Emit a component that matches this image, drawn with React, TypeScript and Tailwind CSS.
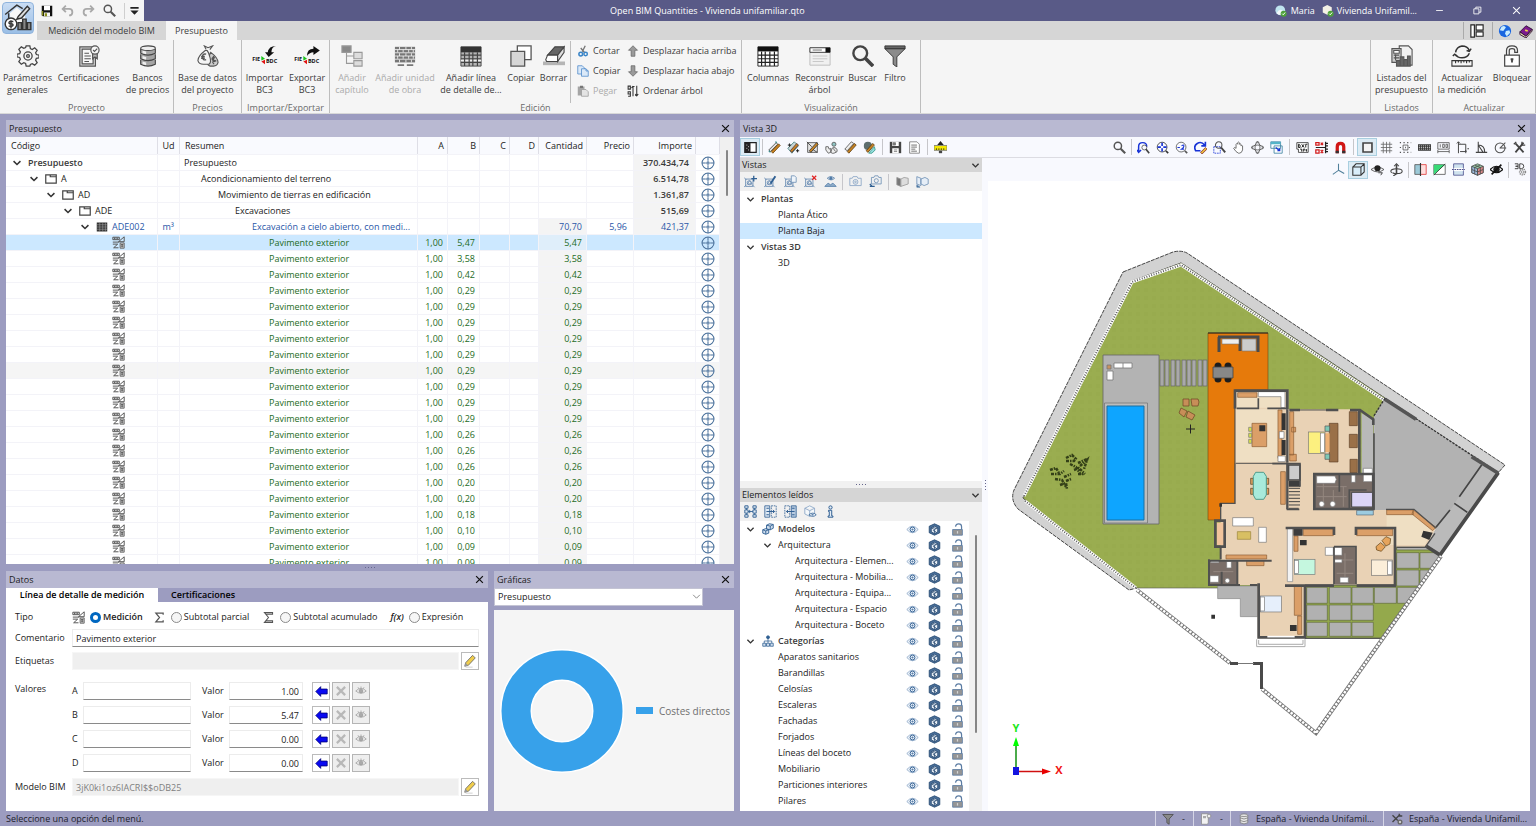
import { useState } from 'react';
import type { ReactNode } from 'react';
import clsx from 'clsx';

const NAVY = '#2f5f92';

/* Small icons, drawn on a 16x16 grid */
const glyphs: Record<string, ReactNode> = {
  chevron: <path d="M2.500 5l5.500 5.500L13.500 5" fill="none" stroke="#333" strokeWidth="2.400" />,
  close: <path d="M2 2l12 12M14 2L2 14" stroke="#111" strokeWidth="2.200" />,
  save: (
    <g>
      <path d="M1 1h14v14H2.500L1 13.500z" fill="#111" />
      <path d="M4 1h8v6H4z" fill="#fff" />
      <path d="M4 10h8v5H4z" fill="#f5f5f5" />
      <path d="M5 11h3v4H5zM1 8h2v6H1z" fill="#8a8f1c" />
    </g>
  ),
  saveGray: (
    <g>
      <path d="M1 1h14v14H1z" fill="#444" />
      <path d="M4 1h8v5H4zM4 9h8v6H4z" fill="#fff" />
      <path d="M5 2h3v3H5zM6 11h4M6 13h4" fill="#777" stroke="#777" />
    </g>
  ),
  undo: <path d="M6 2L2 6l4 4M2 6h8q4 0 4 4t-4 4" fill="none" stroke="#a9a9a9" strokeWidth="2.200" />,
  redo: <path d="M10 2l4 4-4 4M14 6H6q-4 0-4 4t4 4" fill="none" stroke="#a9a9a9" strokeWidth="2.200" />,
  search: (
    <g fill="none" stroke="#555">
      <circle cx="6" cy="6" r="4.500" strokeWidth="1.800" />
      <path d="M9.500 9.500L15 15" strokeWidth="2.600" />
    </g>
  ),
  customize: <path d="M2 3h12v2.500H2zM2 8h12L8 14z" fill="#222" />,
  scissors: (
    <g fill="none">
      <path d="M11 1L7 9M5 4l5 6" stroke="#777" strokeWidth="1.800" />
      <circle cx="5" cy="12" r="2.500" stroke="#3b86c8" strokeWidth="2" />
      <circle cx="11.500" cy="12" r="2.300" stroke="#3b86c8" strokeWidth="2" />
    </g>
  ),
  copyBlue: (
    <g stroke="#4a86c8" fill="#dbe9f8">
      <path d="M1 1h6l3 3v8H1z" />
      <path d="M6 5h6l3 3v7H6z" />
      <path d="M12 5v3h3" fill="none" />
    </g>
  ),
  paste: (
    <g>
      <path d="M1 2h9v12H1z" fill="#a5a5a5" />
      <path d="M4 1h4v3H4z" fill="#777" />
      <path d="M6 6h6l3 3v6H6z" fill="#e4e4e4" stroke="#999" />
    </g>
  ),
  arrowUp: <path d="M8 1l6 6h-3.500v8h-5V7H2z" fill="#9a9a9a" stroke="#666" />,
  arrowDown: <path d="M8 15l6-6h-3.500V1h-5v8H2z" fill="#9a9a9a" stroke="#666" />,
  sort: (
    <g fill="none" stroke="#333" strokeWidth="1.400">
      <path d="M1.500 1.500h3v4h-3zM1.500 9h3v3h-3zM4.500 9v6h-3" />
      <path d="M8 15V2M6 4l2-2.500M8 2h2M13 1v13M11 12l2 2.500 2-2.500M11 14h2" />
    </g>
  ),
  folder: <path d="M1 2.500h14v11H1zM7 2.500v2.500h8" fill="#fff" stroke="#444" strokeWidth="1.600" />,
  wall: (
    <g>
      <path d="M1 2h14v12H1z" fill="#333" />
      <path d="M1 5h14M1 8h14M1 11h14M5 2v12M9 2v12M12.500 2v12" stroke="#aaa" strokeWidth=".7" />
    </g>
  ),
  measure: (
    <g fill="none" stroke="#555">
      <path d="M1 1.500h8v3H1zM3 2v2M5 2v2M7 2v2M15 1v6H8zM1 7.500h8M1 10h6l-5 4.500h6" strokeWidth="1.200" />
      <path d="M10 8.500h5v6.500h-5z" fill="#d5d5d5" />
      <path d="M11 10.500h3M11 12.500h3M12.500 10v4" />
    </g>
  ),
  target: (
    <g fill="none" stroke="#4a719c" strokeWidth="1.200">
      <circle cx="8" cy="8" r="6.800" />
      <path d="M8 1v4.500M8 10.500V15M1 8h4.500M10.500 8H15" />
      <circle cx="8" cy="8" r="1.300" />
    </g>
  ),
  eye: (
    <g fill="none" stroke="#8aa6c6">
      <path d="M1 8q7-8 14 0-7 8-14 0z" fill="#f1f6fb" />
      <circle cx="8" cy="8" r="3" stroke={NAVY} strokeWidth="1.200" />
      <circle cx="8" cy="8" r="1" fill={NAVY} />
    </g>
  ),
  cube: (
    <g stroke="#23466e">
      <path d="M8 1l6.500 3v8L8 15l-6.500-3V4z" fill="#4a6f99" />
      <path d="M8 4l4 2v5l-4 2-4-2V6z" fill="#e8eef5" />
      <path d="M4 6l4 2 4-2M8 8v5M6 5l4 2M6 9l4 2" fill="none" strokeWidth=".9" />
    </g>
  ),
  lock: (
    <g>
      <path d="M5.500 4.500Q6 1 9.500 1T13 4.500V8" fill="none" stroke="#5b7ca3" strokeWidth="1.500" />
      <path d="M2 8h12v7H2z" fill="#959595" stroke="#5b7ca3" />
      <path d="M8 10v3" stroke="#d5d5d5" strokeWidth="1.500" />
    </g>
  ),
  modelos: (
    <g fill="#cfdded" stroke={NAVY} strokeWidth="1.200">
      <path d="M6 3l4-2 5 1v5l-4 2-5-1zM6 3l5 1 4-2M11 4v5" />
      <path d="M1 9l4-1.500 4 1.500v4.500L5 15l-4-1.500zM1 9l4 1.500L9 9M5 10.500V15" />
    </g>
  ),
  categorias: (
    <g fill="#cfdded" stroke={NAVY}>
      <path d="M8 4v4M3 11V8h10v3M8 8v3" fill="none" />
      <circle cx="8" cy="3" r="2" fill={NAVY} />
      <path d="M1 11h4v4H1zM6 11h4v4H6zM11 11h4v4h-4z" />
    </g>
  ),
  pencil: (
    <g>
      <path d="M2 14l1-4L11 1.500l3 3L6 13z" fill="#f0cd4c" stroke="#6b6b6b" />
      <path d="M2 14l1-4 3 3z" fill="#999" />
      <path d="M3 15h8" stroke="#ccc" />
    </g>
  ),
  arrowLeft: <path d="M1 8l6-6v3h8v6H7v3z" fill="#0909f2" stroke="#00007a" />,
  cross: <path d="M2.500 2.500l11 11M13.500 2.500l-11 11" stroke="#b8b8b8" strokeWidth="3" />,
  eyeGray: (
    <g fill="none" stroke="#999">
      <path d="M1 8q7-7 14 0-7 6-14 0z" />
      <circle cx="8" cy="8" r="2.500" fill="#aaa" />
      <path d="M4 3l1 2M8 2v2M12 3l-1 2" />
    </g>
  ),
  sidebar: (
    <g>
      <path d="M1 2h14v12H1z" fill="#fff" stroke="#222" strokeWidth="1.500" />
      <path d="M1 2h7v12H1z" fill="#222" />
      <path d="M3 5h1M5 7h1M3 9h1M5 11h1" stroke="#fff" />
    </g>
  ),
  ruler: (
    <g>
      <path d="M1 11L10 2l2 2-9 9z" fill="#e2e2e2" stroke="#444" />
      <path d="M4 13L13 3.500l2 2L6 15z" fill="#c98422" stroke="#6b4410" />
      <path d="M9 1l2 1M1 12l2 2" stroke="#3e8d8d" strokeWidth="1.500" />
    </g>
  ),
  rulerEdit: (
    <g>
      <path d="M1 9L9 1l5 5-8 9z" fill="#c9d6d6" stroke="#3e7d7d" />
      <path d="M4 12L12 3l2 2-8 9z" fill="#c98422" stroke="#533" />
      <path d="M1 5h4M11 12h4M3 3v4M13 10v4" stroke="#222" strokeWidth="1.200" />
    </g>
  ),
  rulerArea: (
    <g>
      <path d="M2 2v12h12V2z" fill="#e4e4e4" stroke="#666" strokeWidth="1.200" />
      <path d="M4 12L13 2l2 2L6 14z" fill="#c98422" stroke="#333" />
      <path d="M1 1l6 6M9 11l5 3" stroke="#333" />
    </g>
  ),
  hands: (
    <g stroke="#555" fill="#eee">
      <path d="M1 7h3l1 3 2-1v5l-3 1-3-4zM8 11q0-3 3-3t4 3-4 4-3-4z" />
      <circle cx="11" cy="4" r="2.500" fill="#8fc4c4" />
      <path d="M10 9l3 4" />
    </g>
  ),
  rulerCopy: (
    <g>
      <path d="M1 10L9 1l3 2-8 9z" fill="#eee" stroke="#555" />
      <path d="M4 13L13 3l2 2-9 10z" fill="#c98422" stroke="#5b3c12" />
    </g>
  ),
  rulerCyan: (
    <g>
      <circle cx="6" cy="6" r="5" fill="#5d6e6e" />
      <path d="M7 15l7-8 1 4-4 4z" fill="#92dcdc" stroke="#398" />
      <path d="M4 12L12 3l2 2-8 9z" fill="#c98422" stroke="#5b3c12" />
    </g>
  ),
  page: (
    <g>
      <path d="M2 1h9l3 3v11H2z" fill="#fff" stroke="#777" />
      <path d="M4 5h7M4 7.500h7M4 10h5M4 12.500h7" stroke="#555" />
    </g>
  ),
  rulerYellow: (
    <g>
      <path d="M8 0l4 5H4z" fill="#222" />
      <path d="M0 5.500h16v6H0z" fill="#f4e800" stroke="#777" />
      <path d="M3 9v2M6 9v2M9 9v2M12 9v2" stroke="#222" />
      <path d="M6 12h4v3H6z" fill="#444" />
    </g>
  ),
  zoomPrev: (
    <g fill="none">
      <path d="M2 14V7q0-5 5-5t5 5M0 11l2 3 3-3" stroke="#1733d6" strokeWidth="1.800" />
      <circle cx="9" cy="8" r="3" stroke="#555" />
      <path d="M11 10l4 5" stroke="#444" strokeWidth="2" />
    </g>
  ),
  zoomAll: (
    <g fill="none">
      <circle cx="7.500" cy="7.500" r="6" stroke="#333" />
      <path d="M7.500 2v4M7.500 9v4M2 7.500h4M9 7.500h4" stroke="#1733d6" strokeWidth="2" />
      <path d="M12 12l3 3" stroke="#333" strokeWidth="2" />
    </g>
  ),
  zoomTwo: (
    <g fill="none">
      <circle cx="7.500" cy="7.500" r="6" stroke="#555" />
      <path d="M3 8h3M8 6q3-2 3 0t-3 4h3" stroke="#1733d6" strokeWidth="1.300" />
      <path d="M12 12l3 3" stroke="#555" strokeWidth="2" />
    </g>
  ),
  redraw: (
    <g fill="none">
      <path d="M13 5Q9 0 4 3T2 12h6M14 1v5H9" stroke="#1733d6" strokeWidth="2" />
      <path d="M8 14l6-6 2 2-6 6z" fill="#e8b83a" stroke="#833" />
    </g>
  ),
  zoomWindow: (
    <g fill="none">
      <path d="M1 7h8v8H1z" stroke="#1733d6" strokeDasharray="2 1" />
      <circle cx="7" cy="5" r="4" stroke="#555" strokeWidth="1.300" />
      <path d="M10 8l5 6" stroke="#444" strokeWidth="2.400" />
    </g>
  ),
  hand: <path d="M5 9V4q1-2 2 0V2q1-1.500 2 0v2q1-1.500 2 0v2q1-1 2 0v5q-1 4-4 4H8Q5 14 2 9q1-2 3 0z" fill="#fff" stroke="#555" />,
  orbit: (
    <g fill="none" stroke="#555" strokeWidth="1.100">
      <ellipse cx="8" cy="8" rx="6" ry="3" />
      <ellipse cx="8" cy="8" rx="3" ry="6" />
      <path d="M6 2.500L8 0l2 2.500M6 13.500L8 16l2-2.500M2.500 6L0 8l2.500 2M13.500 6L16 8l-2.500 2" />
    </g>
  ),
  windows: (
    <g>
      <path d="M1 1h12v8H1zM5 6h10v9H5z" fill="#fff" stroke="#3a7f9f" />
      <path d="M1 1h12v3H1z" fill="#53b4c8" />
      <path d="M7 8l5 4m0-3v3H9" stroke="#1733d6" strokeWidth="1.500" fill="none" />
    </g>
  ),
  dxf: (
    <g>
      <path d="M1 2h14v12H3V10H1z" fill="#fff" stroke="#333" />
      <path d="M3 4v4h2V5zM7 4l3 4M10 4L7 8M12 8V4h2M5 10h2v3M9 13v-3h2v2M13 10v3" stroke="#222" fill="none" strokeWidth="1.200" />
    </g>
  ),
  dxfRed: (
    <g fill="none" strokeWidth="1.500">
      <path d="M1 2h4v3H1zM7 2l3 3M10 2L7 5M1 11h4v4H1zM7 11l3 4M10 11l-3 4" stroke="#d21b1b" />
      <path d="M1 8h12M13 1v14M13 3h3M13 6h3M13 10h3M13 13h3" stroke="#222" />
    </g>
  ),
  magnet: (
    <g fill="none" strokeWidth="4">
      <path d="M4 15V7q0-4 4-4t4 4v8" stroke="#d01616" />
      <path d="M4 15v-3M12 15v-3" stroke="#333" />
    </g>
  ),
  square: <path d="M2.500 2.500h11v11h-11z" fill="#f4f4f4" stroke="#444" strokeWidth="2" />,
  grid: <path d="M1 4h14M1 8h14M1 12h14M4 1v14M8 1v14M12 1v14" stroke="#666" strokeWidth="1" />,
  snap: (
    <g fill="none" stroke="#555">
      <path d="M5 5h6v6H5z" />
      <path d="M1 2h14M1 14h14M1 8h3M12 8h3" strokeDasharray="1.500 3" strokeWidth="1.500" />
      <path d="M7.500 8h1" strokeWidth="2" />
    </g>
  ),
  keyboard: (
    <g>
      <path d="M0 4h16v8H0z" fill="#333" />
      <path d="M1 6h14M1 8h14M1 10h14" stroke="#ddd" strokeDasharray="1.500 1" />
    </g>
  ),
  dims: (
    <g fill="none" stroke="#555">
      <path d="M1 2h14v8H1zM1 13h14M1 11v4M15 11v4" />
      <path d="M4 4v4M7 4h2v4H7zM11 4h2v4h-2z" />
    </g>
  ),
  extents: (
    <g fill="none" stroke="#444" strokeWidth="1.200">
      <path d="M3 15V1M1 3l2-2 2 2M3 4h9v9M5 13h8M12 15v-4" />
      <path d="M15 9v1" strokeWidth="2" />
    </g>
  ),
  angle: (
    <g fill="none" stroke="#444" strokeWidth="1.300">
      <path d="M4 1v13h11M4 5q8 0 8 9M4 5l6 9M1 14h3" />
    </g>
  ),
  gauge: (
    <g fill="none" stroke="#555" strokeWidth="1.300">
      <circle cx="7.500" cy="8.500" r="6" />
      <path d="M7 9l7-7M8 8.500h7" />
    </g>
  ),
  tools: (
    <g fill="none" stroke="#444" strokeWidth="2.200">
      <path d="M3 3l10 11M13 2L3 14" />
      <path d="M1 4l3-3M11 1v4h4" strokeWidth="1.500" />
    </g>
  ),
  toolsGear: (
    <g fill="none" stroke="#444" strokeWidth="1.800">
      <path d="M2 3l7 7M12 2L2 12M11 1v3h4" />
      <circle cx="12" cy="12" r="2.500" fill="#ccc" stroke="#666" />
    </g>
  ),
  axes: <path d="M8 1v8L1 14M8 9l7 4" fill="none" stroke="#51809a" strokeWidth="1.300" />,
  box: <path d="M1 5h10v10H1zM1 5l4-4h10v10l-4 4M11 5l4-4" fill="#d9eefa" stroke="#333" strokeWidth="1.300" />,
  orbitEye: (
    <g>
      <path d="M0 8q8-6 16 0-8 6-16 0z" fill="#f8f9fe" stroke="#444" />
      <circle cx="8" cy="6.500" r="3.800" fill="#222" />
      <path d="M9 12h5l-2 3" fill="none" stroke="#222" />
    </g>
  ),
  turntable: (
    <g fill="none" stroke="#444" strokeWidth="1.300">
      <ellipse cx="8" cy="10" rx="7" ry="3" />
      <path d="M8 2v12" strokeWidth="2" />
      <path d="M5 4l3-3 3 3M4 12l3 2-3 2" />
    </g>
  ),
  sectionRed: (
    <g>
      <path d="M1 2h7v12H1z" fill="#9cc9d8" stroke="#555" />
      <path d="M8 2h7v12H8z" fill="#ffdede" stroke="#e03a3a" />
      <path d="M8 0v16" stroke="#333" strokeWidth="1.400" />
    </g>
  ),
  sectionGreen: (
    <g>
      <path d="M1 2h14v12H1z" fill="#fff" stroke="#555" />
      <path d="M1 14V2h14z" fill="#38d977" />
      <path d="M1 15L15 1" stroke="#333" />
    </g>
  ),
  sectionBlue: (
    <g stroke="#4a4e8c">
      <path d="M2 1h12v14H2z" fill="#cfe2ee" />
      <path d="M2 6h12v4H2z" fill="#fff" stroke="none" />
      <path d="M0 8h16" strokeDasharray="2 1" strokeWidth="1.500" />
    </g>
  ),
  rubik: (
    <g stroke="#444" strokeWidth=".9">
      <path d="M8 1l7 3v8l-7 3-7-3V4z" fill="#9bcda9" />
      <path d="M8 7l7-3v8l-7 3z" fill="#d98a8a" />
      <path d="M1 4l7 3v8l-7-3z" fill="#9ab8d8" />
      <path d="M1 8l7 3 7-3M4.500 2.500l7 3v8M11.500 2.500l-7 3v8" fill="none" />
    </g>
  ),
  eyeOff: (
    <g fill="none" stroke="#111">
      <path d="M0 8q8-8 16 0-8 8-16 0z" strokeWidth="1.500" />
      <circle cx="8" cy="8" r="3.500" fill="#222" />
      <path d="M2 14L14 2" strokeWidth="2" />
    </g>
  ),
  gear3d: (
    <g fill="none" stroke="#444">
      <path d="M1 1h4v3H2h3v3H1M7 1h2q3 0 3 3T9 7H7z" strokeWidth="1.200" />
      <circle cx="10.500" cy="11" r="3.500" stroke="#888" strokeWidth="2" strokeDasharray="1.500 1" />
      <circle cx="10.500" cy="11" r="1.500" stroke="#888" />
    </g>
  ),
  viewBase: (
    <g fill="none" stroke="#6d8fb4" strokeWidth="1.100">
      <path d="M2 5h9v9H2zM0 3l3 3M0 15l3-3M13 15l-3-3M4 11l3-4 3 4z" />
      <circle cx="6.500" cy="9.500" r="2.500" />
    </g>
  ),
  viewEye: (
    <g fill="none" stroke="#4f7aa6">
      <path d="M4 4q4-4 9 0-4 4-9 0z" />
      <circle cx="8.500" cy="4" r="1.500" fill="#4f7aa6" />
      <path d="M1 14l4-4 3 2 3-2 4 4z" fill="#8fadc9" />
    </g>
  ),
  camera: (
    <g fill="none" stroke="#86a3c4">
      <path d="M1 4h3l1-2h5l1 2h4v9H1z" />
      <circle cx="8" cy="8.500" r="3" />
      <circle cx="8" cy="8.500" r="1" />
    </g>
  ),
  cameraSet: (
    <g fill="none" stroke="#6d8fb4">
      <path d="M3 3h3l1-2h4l1 2h3v8H3z" />
      <circle cx="9" cy="7" r="2.500" />
      <path d="M1 11l3 3M1 14h6" stroke={NAVY} strokeWidth="1.600" />
    </g>
  ),
  cubeGray: (
    <g stroke="#999">
      <path d="M1 3l5 2v9l-5-2z" fill="#777" />
      <path d="M6 5l4-2 5 1v7l-9 3z" fill="#ddd" />
    </g>
  ),
  cubeExport: (
    <g stroke="#6d8fb4" fill="#e6eef7">
      <path d="M1 2l5 2v9l-5-2zM6 5l5-2 4 2v6l-5 2-4-2z" />
      <path d="M1 12l4 3H1z" fill={NAVY} />
    </g>
  ),
  treeAll: (
    <g fill="#dfe9f3" stroke={NAVY} strokeWidth="1.100">
      <path d="M3 1v14M3 8h10M13 1v14M7 6v4" fill="none" />
      <path d="M1 1h4v3H1zM1 6h4v4H1zM1 12h4v3H1zM11 1h4v3h-4zM11 6h4v4h-4zM11 12h4v3h-4z" />
    </g>
  ),
  colLeft: (
    <g fill="none" stroke={NAVY}>
      <path d="M1 1h6v14H1z" fill="#dfe9f3" />
      <path d="M9 1h6v14H9z" strokeDasharray="2 1" />
      <path d="M3 4h3M3 8h10M3 12h3M11 6l2 2-2 2" strokeWidth="1.200" />
    </g>
  ),
  colRight: (
    <g fill="none" stroke={NAVY}>
      <path d="M1 1h6v14H1z" strokeDasharray="2 1" />
      <path d="M9 1h6v14H9z" fill="#b8cbe0" />
      <path d="M10 4h3M3 8h10M10 12h3M5 6L3 8l2 2" strokeWidth="1.200" />
    </g>
  ),
  cubeEye: (
    <g fill="#f4f8fb" stroke="#86a3c4">
      <path d="M7 1l6 3v7l-6 3-6-3V4zM1 4l6 3 6-3M7 7v7" />
      <path d="M6 12q5-4 9 0-4 4-9 0z" stroke={NAVY} />
      <circle cx="10.500" cy="12" r="1" fill={NAVY} />
    </g>
  ),
  info: (
    <g fill="#e3ecf5" stroke={NAVY} strokeWidth="1.200">
      <circle cx="8" cy="3" r="2" />
      <path d="M5.500 6.500h4v7H11V15H5v-1.500h1.500V8h-1z" />
    </g>
  ),
  funnel: <path d="M1 2h14L9.500 8v7l-3-2V8z" fill="#8a8a8a" stroke="#444" />,
  scroll: (
    <g>
      <path d="M2 1h9v12q0 2-2 2H2z" fill="#f2f2f2" stroke="#888" />
      <path d="M4 4h4v3H4z" fill="#aaa" />
      <circle cx="12" cy="4" r="2.500" fill="#eee" stroke="#888" />
    </g>
  ),
  database: (
    <g fill="#e6e6e6" stroke="#777">
      <path d="M3 3v10q5 3 10 0V3" />
      <ellipse cx="8" cy="3" rx="5" ry="1.800" />
      <path d="M3 6.500q5 3 10 0M3 10q5 3 10 0" fill="none" />
    </g>
  ),
  layout: (
    <g fill="#fff" stroke="#222" strokeWidth="1.300">
      <path d="M1 1h4v14H1zM7 1h8v6H7zM7 9h8v5H7z" />
    </g>
  ),
  globe: (
    <g>
      <circle cx="8" cy="8" r="7" fill="#1a66e0" />
      <path d="M4 3q4-2 5 1L6 8 2 7zM9 8l4-1 1 3-4 4-2-3z" fill="#c8ecff" />
    </g>
  ),
  book: (
    <g>
      <path d="M1 9l7-7 7 4-7 8z" fill="#7c1a8e" stroke="#2b0a33" />
      <path d="M1 9v3l7 4 7-8V6l-7 8z" fill="#e8d9b0" stroke="#2b0a33" />
      <path d="M7 7l3 1" stroke="#f3d34a" strokeWidth="2" />
    </g>
  ),
  user: (
    <g>
      <circle cx="7" cy="7" r="6.500" fill="#bfe4ef" />
      <path d="M2 11q5-8 9-2l-2 4H5z" fill="#f4f9fb" />
      <circle cx="11.500" cy="11.500" r="4" fill="#4ea13b" />
      <path d="M9.500 11.500l1.500 1.500 2.500-3" stroke="#fff" fill="none" strokeWidth="1.300" />
    </g>
  ),
  project: (
    <g>
      <path d="M7 0l6 3v7l-6 3-6-3V3z" fill="#f3f1e6" />
      <circle cx="11.500" cy="11.500" r="4" fill="#4ea13b" />
      <path d="M9.500 11.500l1.500 1.500 2.500-3" stroke="#fff" fill="none" strokeWidth="1.300" />
    </g>
  ),
  minimize: <path d="M2 8h12" stroke="#fff" strokeWidth="1.500" />,
  restore: <path d="M1.500 5h9v9h-9zM5 5V2h9v9h-3.500" fill="none" stroke="#fff" strokeWidth="1.500" />,
  closeWhite: <path d="M2 2l12 12M14 2L2 14" stroke="#fff" strokeWidth="1.800" />,
  sum: <path d="M12.500 4.500V2.500H3.500L8 8l-4.500 5.500h9v-2" fill="none" stroke="#555" strokeWidth="1.500" />,
  sumAll: <path d="M13 4.500V2H3l5 6-5 6h10v-2.500M4 4h9M4 12h9" fill="none" stroke="#555" strokeWidth="1.300" />,
};

/* Marks laid over the base view icon */
const viewMarks: Record<string, ReactNode> = {
  viewPlus: <path d="M12 1v7M9 4.500h7" stroke={NAVY} strokeWidth="1.600" />,
  viewPen: <path d="M7 10l6-9 2 1-6 9z" fill={NAVY} />,
  viewCopy: <path d="M9 1h4l2 2v6H9z" fill="#eef4fa" stroke="#6d8fb4" />,
  viewDel: <path d="M10 1l5 5M15 1l-5 5" stroke="#e02020" strokeWidth="1.600" />,
};

/* Ribbon icons, drawn on a 24x24 grid */
const bigGlyphs: Record<string, ReactNode> = {
  app: (
    <g stroke="#333" strokeWidth="1.200">
      <path d="M5 8l6-5 7 6v9H6z" fill="#f7f7f7" stroke="none" />
      <path d="M1 9l10-8 5 3M4 8v5" fill="none" />
      <path d="M12 11l8-9 2 2-7 8-4 1z" fill="#ddd" />
      <path d="M12 16h3v6h-3zM16 13h3v9h-3zM20 16h3v6h-3z" fill="#888" />
      <circle cx="6" cy="17" r="5" fill="#fff" />
      <path d="M8 15H5q-1.500 1 0 2h2q1.500 1 0 2H4M6 14v7" fill="none" />
    </g>
  ),
  gear: (
    <g fill="none" stroke="#444" strokeWidth="1.400">
      <path d="M10 1h4l.6 3 2 .9L19.300 3l2.700 2.700-1.700 2.700.9 2 2.800.6v3l-2.900.6-.8 2 1.700 2.700-2.700 2.700-2.700-1.700-2 .9L14 23h-4l-.6-2.800-2-.9L4.700 21 2 18.300l1.700-2.700-.9-2L0 13v-3l2.900-.6.8-2L2 4.700 4.700 2l2.700 1.700 2-.9z" />
      <circle cx="12" cy="12" r="4.500" />
      <circle cx="12" cy="12" r="1.500" />
    </g>
  ),
  certificate: (
    <g fill="#f7f7f7" stroke="#555" strokeWidth="1.300">
      <path d="M2 2h17v21H2z" fill="#ddd" />
      <path d="M4.500 4.500h12v16h-12z" />
      <path d="M7 9h5M7 12h7M7 15h7M7 18h5" />
      <path d="M16 8v7l2.500-2 2.500 2V8" fill="#bbb" />
      <circle cx="18.500" cy="5.500" r="4.500" />
      <path d="M16.500 5.500L18 7l3-3" fill="none" />
    </g>
  ),
  bank: (
    <g fill="#eee" stroke="#444" strokeWidth="1.200">
      <path d="M4 16v5q8 4 16 0v-5M4 10v5q8 4 16 0v-5M4 4v5q8 4 16 0V4" fill="#a5a5a5" />
      <path d="M6 6v3l4 1V7zM6 12v3l4 1v-3zM6 18v3l4 1v-3z" stroke="none" />
      <ellipse cx="12" cy="3.500" rx="8" ry="2.500" />
    </g>
  ),
  moneybag: (
    <g fill="#f4f4f4" stroke="#555" strokeWidth="1.200">
      <path d="M10 5L8 1l4 2 5-2-3 4" />
      <path d="M15 8q8 6 8 11-1 4-5 4h-4q-4-2-2-7 1-4 3-8z" fill="#ccc" />
      <path d="M9 6q-8 6-8 11 1 4 6 4h6q3-2 1-8-1-5-3-7z" />
      <path d="M10 10q-4-1-4 3t4 3M4.500 12.500h4M4.500 14.500h4M19.500 14q-3-1-3 1t3 2-3 2M18 12v9" fill="none" strokeWidth="1.500" />
    </g>
  ),
  columnsGrid: (
    <g>
      <path d="M1 2h22v21H1z" fill="#fff" stroke="#222" />
      <path d="M1 2h22v5H1z" fill="#111" />
      <path d="M1 11h22M1 15h22M1 19h22M5 7v16M9 7v16M14 7v16M19 7v16" stroke="#222" strokeWidth="1.300" />
    </g>
  ),
  detailLine: (
    <g>
      <path d="M1 2h22v21H1z" fill="#b5b5b5" stroke="#444" />
      <path d="M1 2h22v6H1z" fill="#333" />
      <path d="M1 16h22v2H1z" fill="#eee" />
      <path d="M1 11h22M1 15h22M1 19h22M5 8v15M10 8v15M14 8v15M19 8v15" stroke="#444" strokeWidth="1.300" />
    </g>
  ),
  chapter: (
    <g fill="#ddd" stroke="#999" strokeWidth="1.200">
      <path d="M6 8v12h8M6 12h8" fill="none" />
      <path d="M1 1h10v7H1z" fill="#888" />
      <path d="M14 8h9v7h-9zM14 17h9v6h-9z" />
    </g>
  ),
  bricks: (
    <g>
      <path d="M1 2h22v17H1z" fill="#777" />
      <path d="M1 5h22M1 8.500h22M1 12h22M1 15.500h22M6 2v3M13 2v3M19 2v3M4 5v3M10 5v3M16 5v3M21 5v3M6 9v3M13 9v3M19 9v3M4 12v3M10 12v3M16 12v3M21 12v3M6 16v3M13 16v3M19 16v3" stroke="#f5f5f5" strokeWidth=".9" />
      <path d="M4 22h7M14 22h7" stroke="#777" strokeWidth="2" />
    </g>
  ),
  copy: (
    <g fill="#fff" stroke="#555" strokeWidth="1.400">
      <path d="M8 1h15v15H8z" />
      <path d="M1 7h15v16H1z" fill="#d6d6d6" />
    </g>
  ),
  eraser: (
    <g stroke="#444" strokeWidth="1.200">
      <path d="M0 18h24v4H0z" fill="#b5b5b5" stroke="none" />
      <path d="M5 11L13 2h10l-7 9z" fill="#666" />
      <path d="M5 11h11v7H4l-1-2z" fill="#fff" />
      <path d="M16 11l7-9v6l-7 10z" fill="#ddd" />
    </g>
  ),
  rebuild: (
    <g>
      <path d="M1 3h22v19H1z" fill="#f0f0f0" stroke="#bbb" />
      <path d="M1 3h22v5H1z" fill="#fff" stroke="#333" />
      <path d="M18 3h5v5h-5z" fill="#111" />
      <path d="M4 5.500h10" stroke="#666" />
      <path d="M4 12h16M4 15h16M4 18h12" stroke="#c5c5c5" />
    </g>
  ),
  magnifier: (
    <g fill="none" stroke="#444">
      <circle cx="9" cy="9" r="7.500" strokeWidth="2.600" />
      <path d="M14.500 14.500L23 23" strokeWidth="4" />
    </g>
  ),
  filter: (
    <g stroke="#333">
      <path d="M1 4l9 9v8l4 3V13l9-9z" fill="#8b8b8b" />
      <path d="M1 1h22v3H1z" fill="#666" />
    </g>
  ),
  reports: (
    <g fill="#f1f1f1" stroke="#555" strokeWidth="1.200">
      <path d="M9 1h10l4 4v17H9z" />
      <path d="M1 4h10v15H1z" fill="#ccc" />
      <path d="M3 6h6v3H3zM3 11h6M3 14h6M5 10v7" fill="#fff" />
      <path d="M6 17h4v6H6zM10 13h4v10h-4zM14 16h4v7h-4zM18 12h3v11h-3z" fill="#666" />
    </g>
  ),
  update: (
    <g fill="none" stroke="#333" strokeWidth="1.600">
      <path d="M5 8q1-6 7-7 6 0 8 5M17 6l3 1 2-3M20 9q-2 5-8 5-5 0-8-4M2 12l2-2 3 2" />
      <path d="M1 17h22v6H1zM5 17v3M8 17v2M11 17v3M14 17v2M17 17v3M20 17v2" strokeWidth="1.200" />
    </g>
  ),
  padlock: (
    <g fill="none" stroke="#444" strokeWidth="1.300">
      <path d="M6 11V6q0-5 6-5t6 5v2h-3V6q0-2-3-2T9 6v5" />
      <path d="M4 11h16v12H4z" fill="#fff" />
      <path d="M12 15v4M10.500 15.500h3" strokeWidth="2" />
    </g>
  ),
};

function Icon({ name, className = 'size-3' }: { name: string; className?: string }) {
  return (
    <svg viewBox="0 0 16 16" className={clsx('shrink-0', className)} aria-hidden="true">
      {viewMarks[name] ? <>{glyphs.viewBase}{viewMarks[name]}</> : glyphs[name]}
    </svg>
  );
}

function Bc3Icon({ out = false }: { out?: boolean }) {
  return (
    <svg viewBox="0 0 28 24" className="h-[22px] w-[26px]" aria-hidden="true">
      {out ? (
        <path d="M14 12q0-8 7-8V1l7 5-7 5V8q-4 0-7 4z" fill="#111" />
      ) : (
        <path d="M26 1q-5 1-5 7h3l-6 5-4-5h3q1-7 9-7z" fill="#111" />
      )}
      <text x="0" y="17" fontSize="6" fontWeight="700" fill="#111">FIE</text>
      <text x="15" y="20" fontSize="6" fontWeight="700" fill="#111">BDC</text>
      <path d="M10 12l4 3-4 2z" fill="#19c319" />
      <path d="M14 16v5l-4-3z" fill="#e01212" />
    </svg>
  );
}

interface RibbonButtonProps {
  icon: string;
  lines: string[];
  width: string;
  disabled?: boolean;
}

function RibbonButton({ icon, lines, width, disabled }: RibbonButtonProps) {
  return (
    <button
      type="button"
      disabled={disabled}
      className={clsx('flex shrink-0 flex-col items-center pt-[5px] leading-3', width, disabled ? 'text-[#ababab]' : 'text-[#3c3c3c]')}
    >
      {icon === 'bc3in' || icon === 'bc3out' ? (
        <Bc3Icon out={icon === 'bc3out'} />
      ) : (
        <svg viewBox="0 0 24 24" className="size-[22px]" aria-hidden="true">{bigGlyphs[icon]}</svg>
      )}
      <span className="mt-[5px] flex flex-col whitespace-nowrap">
        {lines.map((line) => <span key={line}>{line}</span>)}
      </span>
    </button>
  );
}

function RibbonGroup({ label, children }: { label: string; children: ReactNode }) {
  return (
    <section className="flex shrink-0 flex-col border-r border-[#bdbdbd] px-px">
      <div className="flex h-[63px]">{children}</div>
      <div className="text-center leading-[10px] text-[#6a6a6a]">{label}</div>
    </section>
  );
}

function SmallAction({ icon, label, disabled }: { icon: string; label: string; disabled?: boolean }) {
  return (
    <button type="button" disabled={disabled} className={clsx('flex h-5 items-center gap-1 whitespace-nowrap', disabled ? 'text-[#ababab]' : 'text-[#3c3c3c]')}>
      <Icon name={icon} className="size-3" />
      {label}
    </button>
  );
}

function ToolButton({ icon, active, wide }: { icon: string; active?: boolean; wide?: boolean }) {
  return (
    <button
      type="button"
      aria-label={icon}
      className={clsx('flex h-[18px] shrink-0 items-center justify-center', wide ? 'w-5' : 'w-[19px]', active && 'border border-[#a9cfe0] bg-[#dcebf4]')}
    >
      <Icon name={icon} className="size-[13px]" />
    </button>
  );
}

function Divider({ tight }: { tight?: boolean }) {
  return <span className={clsx('h-4 w-px shrink-0 bg-[#c6c6ca]', tight ? 'mx-[2px]' : 'mx-[3px]')} />;
}

function PanelTitle({ children }: { children: ReactNode }) {
  return (
    <header className="flex h-[17px] shrink-0 items-center justify-between bg-[#b9b9d2] pr-1 pl-[3px] text-[#222]">
      <h2>{children}</h2>
      <button type="button" aria-label="Cerrar"><Icon name="close" className="size-[9px]" /></button>
    </header>
  );
}

function Grip({ vertical = false }: { vertical?: boolean }) {
  return (
    <span className={clsx('flex gap-[2px]', vertical && 'flex-col')}>
      {[0, 1, 2, 3].map((dot) => <i key={dot} className="size-px bg-[#66668c]" />)}
    </span>
  );
}

/* ---------- Title bar and ribbon ---------- */

function TitleBar() {
  return (
    <div className="flex h-[21px] items-center bg-[#595a87] text-white">
      <div className="flex h-full w-[107px] shrink-0 items-center gap-2 bg-[#f5f5f5] pl-1">
        <button type="button" aria-label="Guardar"><Icon name="save" className="size-3" /></button>
        <button type="button" aria-label="Deshacer"><Icon name="undo" className="size-[13px]" /></button>
        <button type="button" aria-label="Rehacer"><Icon name="redo" className="size-[13px]" /></button>
        <button type="button" aria-label="Buscar"><Icon name="search" className="size-[13px]" /></button>
        <span className="-mr-1 h-4 w-px bg-[#cfcfcf]" />
        <button type="button" aria-label="Personalizar"><Icon name="customize" className="size-[11px]" /></button>
      </div>
      <h1 className="min-w-0 flex-1 truncate pr-1 text-center">Open BIM Quantities - Vivienda unifamiliar.qto</h1>
      <div className="flex items-center">
        <Icon name="user" className="mr-1 size-3" />
        <span>Maria</span>
        <Icon name="project" className="mr-[3px] ml-[7px] size-3" />
        <span>Vivienda Unifamil...</span>
        <button type="button" aria-label="Minimizar" className="ml-[18px]"><Icon name="minimize" className="size-[9px]" /></button>
        <button type="button" aria-label="Restaurar" className="ml-[29px]"><Icon name="restore" className="size-[9px]" /></button>
        <button type="button" aria-label="Cerrar" className="mr-[15px] ml-[30px]"><Icon name="closeWhite" className="size-[9px]" /></button>
      </div>
    </div>
  );
}

function Ribbon() {
  return (
    <div className="shrink-0 bg-[#f5f5f5]">
      <div className="flex">
        <button type="button" aria-label="Open BIM Quantities" className="m-[2px] mr-[3px] flex size-8 items-center justify-center rounded-sm border border-[#8fb3dc] bg-linear-to-b from-[#c9dcf3] to-[#9bbfe6]">
          <svg viewBox="0 0 24 24" className="size-7" aria-hidden="true">{bigGlyphs.app}</svg>
        </button>
        <div className="min-w-0 flex-1">
          <TitleBar />
          <nav className="flex h-[19px] bg-[#d6d6d6] text-[#3c3c3c]">
            <button type="button" className="w-[129px]">Medición del modelo BIM</button>
            <button type="button" className="w-[71px] bg-[#f5f5f5]">Presupuesto</button>
            <div className="ml-auto flex items-center">
              <span className="mr-[6px] h-[17px] w-px bg-[#aaa]" />
              <button type="button" aria-label="Disposición"><Icon name="layout" className="size-[14px]" /></button>
              <span className="mr-[5px] ml-[8px] h-[17px] w-px bg-[#aaa]" />
              <button type="button" aria-label="Web"><Icon name="globe" className="size-[14px]" /></button>
              <button type="button" aria-label="Ayuda" className="mr-[3px] ml-[7px]"><Icon name="book" className="size-[14px]" /></button>
            </div>
          </nav>
        </div>
      </div>
      <div className="flex h-[74px] border-b border-[#d8d8d8]">
        <RibbonGroup label="Proyecto">
          <RibbonButton icon="gear" lines={['Parámetros', 'generales']} width="w-[53px]" />
          <RibbonButton icon="certificate" lines={['Certificaciones']} width="w-[69px]" />
          <RibbonButton icon="bank" lines={['Bancos', 'de precios']} width="w-[49px]" />
        </RibbonGroup>
        <RibbonGroup label="Precios">
          <RibbonButton icon="moneybag" lines={['Base de datos', 'del proyecto']} width="w-[65px]" />
        </RibbonGroup>
        <RibbonGroup label="Importar/Exportar">
          <RibbonButton icon="bc3in" lines={['Importar', 'BC3']} width="w-[43px]" />
          <RibbonButton icon="bc3out" lines={['Exportar', 'BC3']} width="w-[42px]" />
        </RibbonGroup>
        <RibbonGroup label="Edición">
          <RibbonButton icon="chapter" lines={['Añadir', 'capítulo']} width="w-[42px]" disabled />
          <RibbonButton icon="bricks" lines={['Añadir unidad', 'de obra']} width="w-[64px]" disabled />
          <RibbonButton icon="detailLine" lines={['Añadir línea', 'de detalle de...']} width="w-[68px]" />
          <RibbonButton icon="copy" lines={['Copiar']} width="w-8" />
          <RibbonButton icon="eraser" lines={['Borrar']} width="w-[33px]" />
          <div className="mt-px w-[51px] border-l border-[#bdbdbd] pl-[6px]">
            <SmallAction icon="scissors" label="Cortar" />
            <SmallAction icon="copyBlue" label="Copiar" />
            <SmallAction icon="paste" label="Pegar" disabled />
          </div>
          <div className="mt-px w-[119px] pl-[6px]">
            <SmallAction icon="arrowUp" label="Desplazar hacia arriba" />
            <SmallAction icon="arrowDown" label="Desplazar hacia abajo" />
            <SmallAction icon="sort" label="Ordenar árbol" />
          </div>
        </RibbonGroup>
        <RibbonGroup label="Visualización">
          <RibbonButton icon="columnsGrid" lines={['Columnas']} width="w-[50px]" />
          <RibbonButton icon="rebuild" lines={['Reconstruir', 'árbol']} width="w-[53px]" />
          <RibbonButton icon="magnifier" lines={['Buscar']} width="w-[33px]" />
          <RibbonButton icon="filter" lines={['Filtro']} width="mr-2 w-8" />
        </RibbonGroup>
        <div className="ml-auto flex border-l border-[#bdbdbd]">
          <RibbonGroup label="Listados">
            <RibbonButton icon="reports" lines={['Listados del', 'presupuesto']} width="w-[59px]" />
          </RibbonGroup>
          <RibbonGroup label="Actualizar">
            <RibbonButton icon="update" lines={['Actualizar', 'la medición']} width="w-[56px]" />
            <RibbonButton icon="padlock" lines={['Bloquear']} width="w-[44px]" />
          </RibbonGroup>
        </div>
      </div>
    </div>
  );
}

/* ---------- Budget table ---------- */

interface BudgetRow {
  level: number;
  icon?: string;
  code?: string;
  unit?: string;
  summary: string;
  a?: string;
  b?: string;
  amount?: string;
  price?: string;
  total?: string;
}

const quantities = [
  '5,47', '3,58', '0,42', '0,29', '0,29', '0,29', '0,29', '0,29', '0,29', '0,29', '0,29', '0,29',
  '0,26', '0,26', '0,26', '0,20', '0,20', '0,18', '0,10', '0,09', '0,09',
];

const rows: BudgetRow[] = [
  { level: 0, code: 'Presupuesto', summary: 'Presupuesto', total: '370.434,74' },
  { level: 1, icon: 'folder', code: 'A', summary: 'Acondicionamiento del terreno', total: '6.514,78' },
  { level: 2, icon: 'folder', code: 'AD', summary: 'Movimiento de tierras en edificación', total: '1.361,87' },
  { level: 3, icon: 'folder', code: 'ADE', summary: 'Excavaciones', total: '515,69' },
  { level: 4, icon: 'wall', code: 'ADE002', unit: 'm³', summary: 'Excavación a cielo abierto, con medi...', amount: '70,70', price: '5,96', total: '421,37' },
  ...quantities.map((q) => ({ level: 5, icon: 'measure', summary: 'Pavimento exterior', a: '1,00', b: q, amount: q })),
];

const SELECTED = 5;
const HOVERED = 13;

const headCell = 'border-r border-[#dedee6] p-0 font-normal';
const bodyCell = 'border-t border-r border-[#f3f3f8] py-0 pl-0 text-right';

function BudgetPanel() {
  return (
    <section className="flex min-h-0 flex-1 flex-col overflow-hidden bg-white">
      <PanelTitle>Presupuesto</PanelTitle>
      <div className="flex min-h-0 flex-1">
        <div className="min-w-0 flex-1 overflow-hidden">
          <table className="w-full table-fixed border-separate border-spacing-0 whitespace-nowrap">
            <colgroup>
              <col className="w-[152px]" />
              <col className="w-[22px]" />
              <col />
              <col className="w-[30px]" />
              <col className="w-8" />
              <col className="w-[30px]" />
              <col className="w-[29px]" />
              <col className="w-12" />
              <col className="w-[47px]" />
              <col className="w-[62px]" />
              <col className="w-6" />
            </colgroup>
            <thead>
              <tr className="h-[17px] bg-[#f9fafe] text-[#222]">
                <th className={clsx(headCell, 'pl-[5px] text-left')}>Código</th>
                <th className={clsx(headCell, 'text-center')}>Ud</th>
                <th className={clsx(headCell, 'pl-[5px] text-left')}>Resumen</th>
                {['A', 'B', 'C', 'D', 'Cantidad', 'Precio', 'Importe'].map((title) => (
                  <th key={title} className={clsx(headCell, 'pr-[3px] text-right')}>{title}</th>
                ))}
                <th className={headCell} aria-label="Localizar" />
              </tr>
            </thead>
            <tbody>
              {rows.map((row, i) => {
                const detail = row.level === 5;
                const selected = i === SELECTED;
                return (
                  <tr
                    key={i}
                    className={clsx('h-4 leading-[15px]', selected && 'bg-[#cce8ff]', i === HOVERED && 'bg-[#f5f5f5]', detail ? 'text-[#1d6b1d]' : row.level === 4 ? 'text-[#2a57a8]' : 'text-[#222]')}
                  >
                    <td className={clsx(bodyCell, 'pr-0', row.level === 0 && 'font-semibold text-[#3a3a3a]')}>
                      <span className="flex h-[15px] items-center" style={{ paddingLeft: 6 + row.level * 17 }}>
                        {!detail && <Icon name="chevron" className="mr-[6px] size-[10px]" />}
                        {row.icon && <Icon name={row.icon} className={clsx(detail ? 'ml-[15px] size-[13px]' : 'mr-1 size-3')} />}
                        {row.code}
                      </span>
                    </td>
                    <td className={clsx(bodyCell, 'pr-[5px]')}>{row.unit}</td>
                    <td className={clsx(bodyCell, 'overflow-hidden pr-1')}>
                      <span className="block truncate text-left" style={{ paddingLeft: 4 + row.level * 17 }}>{row.summary}</span>
                    </td>
                    <td className={clsx(bodyCell, 'pr-1')}>{row.a}</td>
                    <td className={clsx(bodyCell, 'pr-1')}>{row.b}</td>
                    <td className={bodyCell} />
                    <td className={bodyCell} />
                    <td className={clsx(bodyCell, 'pr-1', row.amount && (selected ? 'bg-[#dfeefa]' : 'bg-[#f4f4f4]'))}>{row.amount}</td>
                    <td className={clsx(bodyCell, 'pr-[6px]')}>{row.price}</td>
                    <td className={clsx(bodyCell, 'pr-[6px]', !detail && 'bg-[#f4f4f4]', row.level < 4 && 'font-semibold text-[#3a3a3a]')}>{row.total}</td>
                    <td className={clsx(bodyCell, 'pr-0')}>
                      <button type="button" aria-label="Localizar" className="flex h-[15px] w-full items-center justify-center">
                        <Icon name="target" className="size-[14px]" />
                      </button>
                    </td>
                  </tr>
                );
              })}
            </tbody>
          </table>
        </div>
        <div className="flex w-[14px] justify-center bg-[#f0f0f0] pt-[13px]">
          <span className="h-[46px] w-[2px] rounded-full bg-[#868686]" />
        </div>
      </div>
    </section>
  );
}

/* ---------- Detail form ---------- */

const kinds = [
  { id: 'medicion', label: 'Medición', icon: 'measure', gap: '' },
  { id: 'parcial', label: 'Subtotal parcial', icon: 'sum', gap: 'ml-[10px]' },
  { id: 'acumulado', label: 'Subtotal acumulado', icon: 'sumAll', gap: 'ml-[13px]' },
  { id: 'expresion', label: 'Expresión', icon: '', gap: 'ml-[13px]' },
];

const dimensions = [
  { id: 'A', value: '1.00' },
  { id: 'B', value: '5.47' },
  { id: 'C', value: '0.00' },
  { id: 'D', value: '0.00' },
];

const field = 'h-[18px] min-w-0 border border-[#ececec] border-b-[#8a8a8a] bg-white px-[3px] text-[#222]';
const readOnlyField = 'h-[18px] min-w-0 flex-1 border border-[#f6f6f6] bg-[#efefef] px-[3px] text-[#808080]';
const squareButton = 'flex size-[18px] shrink-0 items-center justify-center border';

function DetailPanel() {
  const [kind, setKind] = useState('medicion');

  return (
    <section className="flex min-w-0 flex-col">
      <PanelTitle>Datos</PanelTitle>
      <div className="flex h-[14px] shrink-0 font-semibold text-black">
        <button type="button" className="w-[152px] bg-white">Línea de detalle de medición</button>
        <button type="button" className="ml-[13px]">Certificaciones</button>
      </div>
      <div className="flex-1 bg-white px-[9px] pt-[6px] text-[#222]">
        <div className="flex h-[18px] items-center whitespace-nowrap">
          <span className="w-[57px]">Tipo</span>
          {kinds.map(({ id, label, icon, gap }) => (
            <label key={id} className={clsx('flex items-center', gap, id === kind && 'font-semibold')}>
              {icon ? <Icon name={icon} className="mr-[5px] size-[13px]" /> : <i className="mr-[5px] font-semibold">f(x)</i>}
              <input
                type="radio"
                name="kind"
                checked={id === kind}
                onChange={() => setKind(id)}
                className="mr-[2px] size-[11px] appearance-none rounded-full border border-[#8a8a8a] bg-[#f6f6f6] checked:border-[3px] checked:border-[#0067c0] checked:bg-white"
              />
              {label}
            </label>
          ))}
        </div>
        <div className="mt-[3px] flex items-center">
          <label htmlFor="comment" className="w-[57px]">Comentario</label>
          <input id="comment" defaultValue="Pavimento exterior" className={clsx(field, 'flex-1')} />
        </div>
        <div className="mt-[5px] flex items-center">
          <label htmlFor="tags" className="w-[57px]">Etiquetas</label>
          <input id="tags" readOnly className={readOnlyField} />
          <button type="button" aria-label="Editar etiquetas" className={clsx(squareButton, 'ml-[2px] border-[#bbb] bg-white')}><Icon name="pencil" className="size-[14px]" /></button>
        </div>
        <div className="mt-3 flex">
          <span className="w-[57px] pt-px">Valores</span>
          <div className="flex flex-col gap-[6px]">
            {dimensions.map(({ id, value }) => (
              <div key={id} className="flex items-center">
                <label htmlFor={`name-${id}`} className="w-[11px]">{id}</label>
                <input id={`name-${id}`} className={clsx(field, 'w-[108px]')} />
                <label htmlFor={`value-${id}`} className="ml-[11px] w-[27px]">Valor</label>
                <input id={`value-${id}`} defaultValue={value} className={clsx(field, 'w-[74px] text-right')} />
                <button type="button" aria-label="Asignar" className={clsx(squareButton, 'ml-[9px] border-[#bbb] bg-white')}><Icon name="arrowLeft" className="size-[13px]" /></button>
                <button type="button" aria-label="Borrar" disabled className={clsx(squareButton, 'ml-[2px] border-[#b5b5b5] bg-[#eee]')}><Icon name="cross" /></button>
                <button type="button" aria-label="Ver" disabled className={clsx(squareButton, 'ml-[2px] border-[#b5b5b5] bg-[#eee]')}><Icon name="eyeGray" /></button>
              </div>
            ))}
          </div>
        </div>
        <div className="mt-[6px] flex items-center">
          <label htmlFor="model" className="w-[57px] whitespace-nowrap">Modelo BIM</label>
          <input id="model" readOnly value="3jK0ki1oz6IACRI$$oDB25" className={readOnlyField} />
          <button type="button" aria-label="Editar modelo" className={clsx(squareButton, 'ml-[2px] border-[#bbb] bg-white')}><Icon name="pencil" className="size-[14px]" /></button>
        </div>
      </div>
    </section>
  );
}

function ChartPanel() {
  return (
    <section className="flex min-w-0 flex-col">
      <PanelTitle>Gráficas</PanelTitle>
      <div className="relative w-[209px]">
        <select aria-label="Gráfica" className="h-[18px] w-full appearance-none border border-[#c4c4d4] bg-white px-[3px] text-[#222]">
          <option>Presupuesto</option>
        </select>
        <svg viewBox="0 0 16 16" className="pointer-events-none absolute top-1 right-[2px] size-[9px]" aria-hidden="true">
          <path d="M2 5l6 6 6-6" fill="none" stroke="#777" strokeWidth="1.500" />
        </svg>
      </div>
      <div className="mt-1 flex flex-1 items-center bg-[#f5f5f5] pl-[6px]">
        <svg viewBox="0 0 124 124" className="size-[124px] shrink-0" aria-label="Costes directos">
          <circle cx="62" cy="62" r="46" fill="none" stroke="#fff" strokeWidth="32" />
          <circle cx="62" cy="62" r="46" fill="none" stroke="#37a1ea" strokeWidth="29" />
        </svg>
        <span className="mr-[6px] ml-3 h-[7px] w-[17px] shrink-0 bg-[#37a1ea]" />
        <span className="text-[10px] whitespace-nowrap text-[#6f6f6f]">Costes directos</span>
      </div>
    </section>
  );
}

/* ---------- View trees ---------- */

function SideHeader({ children }: { children: ReactNode }) {
  return (
    <header className="flex h-[14px] shrink-0 items-center justify-between bg-[#d5d5d5] px-[2px] text-[#222]">
      <h3>{children}</h3>
      <Icon name="chevron" className="size-[9px]" />
    </header>
  );
}

function SideTool({ icon }: { icon: string }) {
  return (
    <button type="button" aria-label={icon} className="flex h-[18px] w-5 shrink-0 items-center justify-center">
      <Icon name={icon} className="size-[13px]" />
    </button>
  );
}

const views = [
  { label: 'Plantas', group: true },
  { label: 'Planta Ático' },
  { label: 'Planta Baja', selected: true },
  { label: 'Vistas 3D', group: true },
  { label: '3D' },
];

interface ElementRow {
  label: string;
  kind?: 'root' | 'branch' | 'leaf';
  icon?: string;
}

const elements: ElementRow[] = [
  { label: 'Modelos', kind: 'root', icon: 'modelos' },
  { label: 'Arquitectura', kind: 'branch' },
  { label: 'Arquitectura - Elemen...', kind: 'leaf' },
  { label: 'Arquitectura - Mobilia...', kind: 'leaf' },
  { label: 'Arquitectura - Equipa...', kind: 'leaf' },
  { label: 'Arquitectura - Espacio', kind: 'leaf' },
  { label: 'Arquitectura - Boceto', kind: 'leaf' },
  { label: 'Categorías', kind: 'root', icon: 'categorias' },
  { label: 'Aparatos sanitarios' },
  { label: 'Barandillas' },
  { label: 'Celosías' },
  { label: 'Escaleras' },
  { label: 'Fachadas' },
  { label: 'Forjados' },
  { label: 'Líneas del boceto' },
  { label: 'Mobiliario' },
  { label: 'Particiones interiores' },
  { label: 'Pilares' },
];

function ViewsSidebar() {
  return (
    <aside className="flex w-[242px] shrink-0 flex-col text-[#222]">
      <SideHeader>Vistas</SideHeader>
      <div className="flex h-[19px] shrink-0 items-center bg-[#f1f1f1]">
        {['viewPlus', 'viewPen', 'viewCopy', 'viewDel', 'viewEye'].map((icon) => <SideTool key={icon} icon={icon} />)}
        <Divider tight />
        <SideTool icon="camera" />
        <SideTool icon="cameraSet" />
        <Divider />
        <SideTool icon="cubeGray" />
        <SideTool icon="cubeExport" />
      </div>
      <ul className="min-h-0 flex-1 overflow-hidden bg-white">
        {views.map(({ label, group, selected }) => (
          <li key={label} className={clsx('flex h-4 items-center', group ? 'pl-[6px] font-semibold text-[#3a3a3a]' : 'pl-[38px]', selected && 'bg-[#cce8ff]')}>
            {group && <Icon name="chevron" className="mr-[6px] size-[9px]" />}
            {label}
          </li>
        ))}
      </ul>
      <div className="flex h-[7px] shrink-0 items-center justify-center bg-[#f1f1f1]"><Grip /></div>
      <SideHeader>Elementos leídos</SideHeader>
      <div className="flex h-[19px] shrink-0 items-center bg-[#f1f1f1]">
        {['treeAll', 'colLeft', 'colRight', 'cubeEye', 'info'].map((icon) => <SideTool key={icon} icon={icon} />)}
      </div>
      <div className="flex h-[290px] shrink-0 bg-white">
        <ul className="min-w-0 flex-1 overflow-hidden whitespace-nowrap">
          {elements.map(({ label, kind, icon }) => (
            <li
              key={label}
              className={clsx('flex h-4 items-center', kind === 'root' ? 'pl-[6px] font-semibold text-[#3a3a3a]' : kind === 'branch' ? 'pl-[23px]' : kind === 'leaf' ? 'pl-[55px]' : 'pl-[38px]')}
            >
              {(kind === 'root' || kind === 'branch') && <Icon name="chevron" className="mr-[6px] size-[9px]" />}
              {icon && <Icon name={icon} className="mr-1 ml-px size-3" />}
              <span className="min-w-0 flex-1 truncate">{label}</span>
              <button type="button" aria-label="Visible"><Icon name="eye" className="size-[13px]" /></button>
              <button type="button" aria-label="Representación" className="ml-[9px]"><Icon name="cube" className="size-[13px]" /></button>
              <button type="button" aria-label="Bloqueo" className="mr-[5px] ml-[10px]"><Icon name="lock" className="size-[13px]" /></button>
            </li>
          ))}
        </ul>
        <div className="flex w-[13px] justify-center bg-[#f1f1f1] pt-[14px]">
          <span className="h-[198px] w-[2px] rounded-full bg-[#868686]" />
        </div>
      </div>
    </aside>
  );
}

/* ---------- Floor plan ---------- */

function Bed({ x, y, w, h, fill, flip }: { x: number; y: number; w: number; h: number; fill: string; flip?: boolean }) {
  return (
    <g stroke="#777" strokeWidth="2">
      <rect x={x} y={y} width={w} height={h} fill={fill} />
      <rect x={flip ? x + w - 14 : x} y={y + 3} width="13" height={h - 6} fill="#fff" />
    </g>
  );
}

function House() {
  return (
    <g transform="translate(1190 320) scale(0.3333)">
      {/* paved garden */}
      <path d="M345 680H760L750 705 573 955H345z" fill="#94a94c" stroke="#555" strokeWidth="3" />
      <clipPath id="garden"><path d="M345 680H768L573 955H345z" /></clipPath>
      <g fill="#b1b1b1" stroke="#5f6b3a" strokeWidth="2" clipPath="url(#garden)">
        <path d="M620 680h130v10H620zM620 698h67v47h-67zM690 698h67v47h-67zM620 750h67v48h-67zM690 750h67v48h-67z" />
        <path d="M350 802h62v48h-62zM418 802h65v48h-65zM486 802h64v48h-64zM553 802h66v48h-66zM622 802h66v48h-66z" />
        <path d="M350 855h62v46h-62zM418 855h65v46h-65zM486 855h64v46h-64zM350 907h62v42h-62zM418 907h65v42h-65zM486 907h64v42h-64z" />
      </g>
      <path d="M83 798h120v92h-52v-54H83z" fill="#b4b4b4" stroke="#888" strokeWidth="2" />

      {/* driveway */}
      <path d="M585 235L925 458 750 705 705 680 738 625 670 570H553V290z" fill="#b2b2b2" />
      <path d="M585 235L550 290M585 235L925 458" fill="none" stroke="#333" strokeWidth="4" strokeDasharray="7 4" />
      <path d="M875 435L925 458 750 705 712 680 742 622 780 572 808 528z" fill="#bababa" />
      <path d="M925 458L750 705 708 678" fill="none" stroke="#4a4a4a" strokeWidth="11" />
      <path d="M585 238L678 298M845 410L925 460" stroke="#555" strokeWidth="11" />
      <path d="M875 435L808 530M793 550L832 577M780 570L738 622" stroke="#444" strokeWidth="5" />

      {/* floor */}
      <path d="M135 210H295V268H510V460H552V570H670L738 625 708 680H617V795H345V955H203V795H55V720H92V550H135z" fill="#e9d2b5" />
      <path d="M140 218h145v45H140zM138 268h125v158H138zM590 585h80l55 48-20 42H590z" fill="#efdfc3" />
      <path d="M515 280l35 20v160h-35z" fill="#b9b9b9" />
      <path d="M373 462h178v105H373zM432 682h65v110h-65zM58 722h85v70H58z" fill="#7a6e68" />
      <path d="M380 500h90M380 530h90M400 480v80M430 510v50M460 500v60M440 720h50M440 760h50M465 700v90M70 755h60" stroke="#94877f" strokeWidth="3" />

      {/* furniture */}
      <g fill="#db9f68" stroke="#8a5c33" strokeWidth="2">
        <path d="M186 310h44v70h-44zM143 218h58v14h-58zM264 270h12v145h-12zM299 275h12v130h-12zM272 455h14v98h-14zM299 403h20v20h-20zM305 322h12v14h-12z" />
        <path d="M340 627h90v20h-90zM500 627h108v20H500zM590 570h80v14h-80zM670 570l68 52-10 10-62-50zM312 648h12v46h-12zM108 705h122v12H108zM170 722h52v15h-52zM313 798h22v88h-22zM323 888h12v55h-12z" />
        <path d="M558 680l14-12 14 12-12 14-14-4zM576 662l12-12 14 6-2 16-12 6z" fill="#e6a45c" stroke="#5b3c12" />
      </g>
      <g fill="#9a7048" stroke="#5f4328" strokeWidth="2">
        <path d="M418 310h26v116h-26zM478 275h24v42h-24zM478 343h24v40h-24zM480 418h22v40h-22z" />
      </g>
      <path d="M405 340h14v56h-14z" fill="#efb276" />
      <path d="M405 318h14v16h-14zM405 402h14v16h-14z" fill="#7fc8b5" stroke="#555" strokeWidth="2" />
      <Bed x={355} y={336} w={50} h={64} fill="#fcf07f" flip />
      <Bed x={313} y={718} w={62} h={46} fill="#c5f7df" />
      <Bed x={545} y={720} w={62} h={46} fill="#fbeed9" flip />
      <Bed x={211} y={828} w={63} h={48} fill="#e6effb" />
      <path d="M205 215h80v48h-12v-33h-68z" fill="#fff" stroke="#777" strokeWidth="2" />
      <path d="M208 316h18v18h-18zM275 280h12v50h-12zM275 360h12v45h-12zM330 660h20v16h-20zM300 915h20v18h-20zM700 632l28 6-10 22-24-10z" fill="#333" />
      <g fill="#d7e04a" stroke="#777" strokeWidth="2">
        <path d="M176 322h9v12h-9zM176 340h9v12h-9zM176 358h9v12h-9z" />
      </g>
      <g fill="#dba05e" stroke="#553a1c" strokeWidth="2">
        <path d="M182 475h8v18h-8zM182 505h8v18h-8zM228 475h8v18h-8zM228 505h8v18h-8z" />
      </g>
      <path d="M197 457h24l8 12v56l-8 13h-24l-7-13v-56z" fill="#a8eadb" stroke="#4f9b8b" strokeWidth="3" />
      <g fill="#fff" stroke="#777" strokeWidth="2">
        <path d="M128 593h62v25h-62zM206 622h23v45h-23zM268 335h14v20h-14zM264 408h22v17h-22zM520 445h27v40h-27zM484 465h12v22h-12zM432 682h24v24h-24zM406 682h24v24h-24zM450 772h25v16h-25zM434 718h22v10h-22zM60 767h26v20H60zM62 722h25v6H62zM110 724h14v20h-14z" />
        <path d="M380 468h55l4 10-4 12h-55z" />
        <circle cx="395" cy="552" r="8" />
        <circle cx="428" cy="552" r="8" />
        <circle cx="112" cy="782" r="7" />
      </g>
      <path d="M142 635h40v23h-40z" fill="#d8bf63" stroke="#9a833a" strokeWidth="2" />
      <path d="M485 517h63v44h-63z" fill="#dcd5f7" stroke="#444" strokeWidth="3" />
      <path d="M500 571h50v14h-50z" fill="#9ccbe0" stroke="#567" strokeWidth="2" />
      <path d="M296 435h34v45h-34z" fill="#ccc" stroke="#444" strokeWidth="4" />
      <path d="M296 482h34v18h-34zM310 622h28v25h-28z" fill="#3d3d3d" />
      <path d="M296 505h34M296 515h34M296 525h34M296 535h34M296 545h34M296 555h34M296 565h30" stroke="#444" strokeWidth="3" />
      <path d="M292 625h16v160h-16z" fill="#f3f3f3" stroke="#888" strokeWidth="2" />
      <path d="M80 608h22v67H80z" fill="#f1c49c" />

      {/* walls */}
      <g fill="none" stroke="#505050" strokeWidth="8">
        <path d="M135 266V212H292V268M298 270H330M408 270H445M480 270H510L550 298V315M508 270V460M373 462H550V567H373z" />
        <path d="M330 270H408" strokeWidth="3" />
        <path d="M292 268V428M292 430V568" strokeWidth="7" />
        <path d="M232 265H292M205 235V268M140 265H205M247 431H330V500M448 462V515M478 567V510H530M290 568H328M373 567H552V340" strokeWidth="5" />
        <path d="M135 430V550H92V600" strokeWidth="4" />
        <path d="M137 430H292M135 266V430" strokeWidth="3" />
        <path d="M76 602h28v78H76z" />
        <path d="M92 680V718M55 722H245M57 718V795H150M180 795H203M142 720V792M95 755V795" strokeWidth="6" />
        <path d="M287 624H432V645M498 645V624H615V797H500M432 797H285M206 790V952H345V797" />
        <path d="M432 680H498V792M432 680V792" strokeWidth="5" />
        <path d="M588 568H672L738 625M620 682H705L735 640" strokeWidth="4" />
        <path d="M345 955H573M345 795H617" strokeWidth="3" />
      </g>
      <path d="M232 950h82" stroke="#fff" strokeWidth="5" />
      <path d="M200 958v22h145v-22M206 960v13h133v-13" fill="none" stroke="#aaa" strokeWidth="3" />
      <path d="M88 550h8v10h-8zM64 884h11v12H64z" fill="#333" />
    </g>
  );
}

function FloorPlan() {
  return (
    <svg viewBox="988 181 542 630" className="size-full" role="img" aria-label="Planta Baja">
      <defs>
        <pattern id="grass" width="8" height="8" patternUnits="userSpaceOnUse">
          <path d="M0 0h8v8H0z" fill="#9aad50" />
          <path d="M0 0h4v4H0z" fill="#98ab4e" />
        </pattern>
      </defs>
      {/* perimeter wall */}
      <path d="M1123 272L1173 252Q1181 250 1187 253L1505 465 1498 473 1181 263 1132 281 1023 498 1137 588 1129 590 1018 509Q1010 500 1014 490z" fill="#d2d2d2" stroke="#444" strokeWidth="1" strokeDasharray="4 1" />
      <path d="M1132 281L1181 263 1385 398 1374 417V588H1136L1023 498z" fill="url(#grass)" stroke="#555" strokeWidth=".6" />
      <g fill="none">
        <path d="M1024 496L1132 282 1181 265 1384 400M1025 501L1136 588" stroke="#fff" strokeWidth="3" />
        <path d="M1024 496L1132 282 1181 265 1384 400M1025 501L1136 588" stroke="#5f5f5f" strokeWidth="2" strokeDasharray="1 1.500" />
      </g>

      {/* terrace, pool and path */}
      <path d="M1208 333h60v57h-33v114h-14v16h-13z" fill="#e67a0b" stroke="#6b4a12" strokeWidth=".6" />
      <path d="M1208 333h60" stroke="#222" />
      <path d="M1103 355h56v169h-56z" fill="#b3b3b3" stroke="#666" strokeWidth=".8" />
      <path d="M1104.500 403h43v120h-43z" fill="#bcbcbc" stroke="#777" strokeWidth=".8" />
      <path d="M1107 406h37v114h-37z" fill="#0ea5ff" stroke="#1d6f9f" strokeWidth="1" />
      <g fill="#a9a9a9" stroke="#666" strokeWidth=".7">
        {[1160, 1165, 1171, 1176, 1182, 1187, 1192, 1198, 1203].map((x) => <rect key={x} x={x} y="360" width="4" height="26" />)}
      </g>
      <g fill="#fff" stroke="#777" strokeWidth=".8">
        <path d="M1114 363h18v5h-18zM1123 363v5M1107 371h6v9h-6z" />
        <path d="M1107 365h4v4h-4z" fill="#c8925f" />
      </g>
      <g fill="#c78e58" stroke="#6b4524" strokeWidth=".7">
        <path d="M1183 399h6v7h-6zM1191 399l7 0 1 3-1 4h-6zM1181 408l6 3-3 6-5-4zM1188 411l7 4-3 5-6-3z" />
      </g>
      <path d="M1186 429h9M1190.500 424.500v9" stroke="#222" />

      {/* outdoor kitchen and table */}
      <path d="M1218 337h40v15M1219 337v15M1240 337v14M1258 337v15" fill="none" stroke="#4a4a4a" strokeWidth="3" />
      <path d="M1222 339h17v5h-17z" fill="#eee" stroke="#777" strokeWidth=".6" />
      <path d="M1242 339h14v12h-14z" fill="#ccc" stroke="#777" strokeWidth=".6" />
      <g fill="#1d1d1d">
        <circle cx="1218" cy="366" r="3.500" />
        <circle cx="1228" cy="366" r="3.500" />
        <circle cx="1218" cy="379" r="3.500" />
        <circle cx="1228" cy="379" r="3.500" />
      </g>
      <path d="M1213 367h20v11h-20z" fill="#888" stroke="#444" strokeWidth=".8" />

      {/* shrubs */}
      <g fill="none" stroke="#344018" strokeWidth="2.500" strokeDasharray="3 1 1.500 1">
        <path d="M1066 458l6-3 4 4M1066 461h8l3-4M1070 464l6 3 5 8M1078 463l9-4M1080 466l7-6-3 9M1074 470l5-2 6 6M1078 474h6" />
        <path d="M1050 470l6-2 3 5M1051 474h9l4-3M1055 479l7 1 4 7M1064 477l7-3M1060 485l6-2 1 6M1066 481l5-2" />
      </g>

      <House />

      {/* fences */}
      <g fill="none">
        <path d="M1137 590L1230 663M1262 689L1316 733 1441 556" stroke="#777" strokeWidth="4" />
        <path d="M1137 590L1230 663M1262 689L1316 733 1441 556" stroke="#fff" strokeWidth="2.400" strokeDasharray="2.500 1.200" />
        <path d="M1230 663.500h8M1253 663.500h8.500V689" stroke="#4a4a4a" strokeWidth="3" />
        <path d="M1238 663.500h16" stroke="#777" />
      </g>

      {/* axes */}
      <path d="M1016 771V745" stroke="#0f8f0f" strokeWidth="1.500" />
      <path d="M1016 737l3 9h-6z" fill="#0f0" />
      <path d="M1016 771.500h27" stroke="#d01010" strokeWidth="1.500" />
      <path d="M1051 771.500l-9-3v6z" fill="#e80000" />
      <path d="M1013 767h6v8h-6z" fill="#1414e0" />
      <text x="1016" y="732" fontSize="11" fontWeight="700" fill="#1be81b" textAnchor="middle">Y</text>
      <text x="1059" y="774" fontSize="11" fontWeight="700" fill="#f01414" textAnchor="middle">X</text>
    </svg>
  );
}

function ViewPanel() {
  return (
    <section className="flex min-w-0 flex-col bg-[#f8f9fe]">
      <PanelTitle>Vista 3D</PanelTitle>
      <div className="flex h-[21px] shrink-0 items-center border-b border-[#dcdce2]">
        <ToolButton icon="sidebar" active wide />
        <Divider tight />
        {['ruler', 'rulerEdit', 'rulerArea', 'hands', 'rulerCopy', 'rulerCyan'].map((icon) => <ToolButton key={icon} icon={icon} />)}
        <Divider />
        <ToolButton icon="saveGray" />
        <ToolButton icon="page" />
        <Divider />
        <ToolButton icon="rulerYellow" />
        <div className="ml-auto flex items-center pr-px">
          <ToolButton icon="search" />
          <Divider tight />
          {['zoomPrev', 'zoomAll', 'zoomTwo', 'redraw', 'zoomWindow', 'hand', 'orbit', 'windows'].map((icon) => <ToolButton key={icon} icon={icon} />)}
          <Divider />
          {['dxf', 'dxfRed', 'magnet'].map((icon) => <ToolButton key={icon} icon={icon} />)}
          <Divider />
          <ToolButton icon="square" active wide />
          {['grid', 'snap', 'keyboard', 'dims', 'extents', 'angle', 'gauge', 'tools'].map((icon) => <ToolButton key={icon} icon={icon} />)}
        </div>
      </div>
      <div className="flex min-h-0 flex-1">
        <ViewsSidebar />
        <div className="flex w-[6px] shrink-0 items-center justify-center"><Grip vertical /></div>
        <div className="flex min-w-0 flex-1 flex-col">
          <div className="flex h-[23px] shrink-0 items-center justify-end">
            <ToolButton icon="axes" />
            <ToolButton icon="box" active wide />
            <ToolButton icon="orbitEye" />
            <ToolButton icon="turntable" />
            <Divider tight />
            {['sectionRed', 'sectionGreen', 'sectionBlue', 'rubik', 'eyeOff'].map((icon) => <ToolButton key={icon} icon={icon} />)}
            <Divider tight />
            <ToolButton icon="gear3d" />
          </div>
          <div className="min-h-0 flex-1 bg-white"><FloorPlan /></div>
        </div>
      </div>
    </section>
  );
}

function StatusBar() {
  return (
    <footer className="flex h-[15px] shrink-0 items-center pl-[6px] whitespace-nowrap text-[#1c1c2c]">
      <span className="flex-1">Seleccione una opción del menú.</span>
      <span className="flex h-full w-[38px] items-center gap-2 border-l border-[#d5d5e6] pl-[6px]"><Icon name="funnel" />-</span>
      <span className="flex h-full w-[37px] items-center gap-2 border-l border-[#d5d5e6] pl-[6px]"><Icon name="scroll" />-</span>
      <span className="flex h-full w-[153px] items-center gap-[6px] border-l border-[#d5d5e6] pl-[7px]"><Icon name="database" />España - Vivienda Unifamil...</span>
      <span className="flex h-full w-[153px] items-center gap-[6px] border-l border-[#d5d5e6] pl-[7px]"><Icon name="toolsGear" />España - Vivienda Unifamil...</span>
    </footer>
  );
}

export default function App() {
  return (
    <div className="flex h-screen flex-col overflow-hidden bg-[#9c9cc0] font-['Open_Sans','Noto_Sans',sans-serif] text-[9px] leading-3">
      <Ribbon />
      <main className="grid min-h-0 flex-1 grid-cols-[728fr_790fr] gap-[6px] px-[6px] pt-[6px]">
        <div className="flex min-h-0 min-w-0 flex-col">
          <BudgetPanel />
          <div className="flex h-[7px] shrink-0 items-center justify-center"><Grip /></div>
          <div className="grid h-[240px] shrink-0 grid-cols-[482fr_240fr] gap-[6px]">
            <DetailPanel />
            <ChartPanel />
          </div>
        </div>
        <ViewPanel />
      </main>
      <StatusBar />
    </div>
  );
}
